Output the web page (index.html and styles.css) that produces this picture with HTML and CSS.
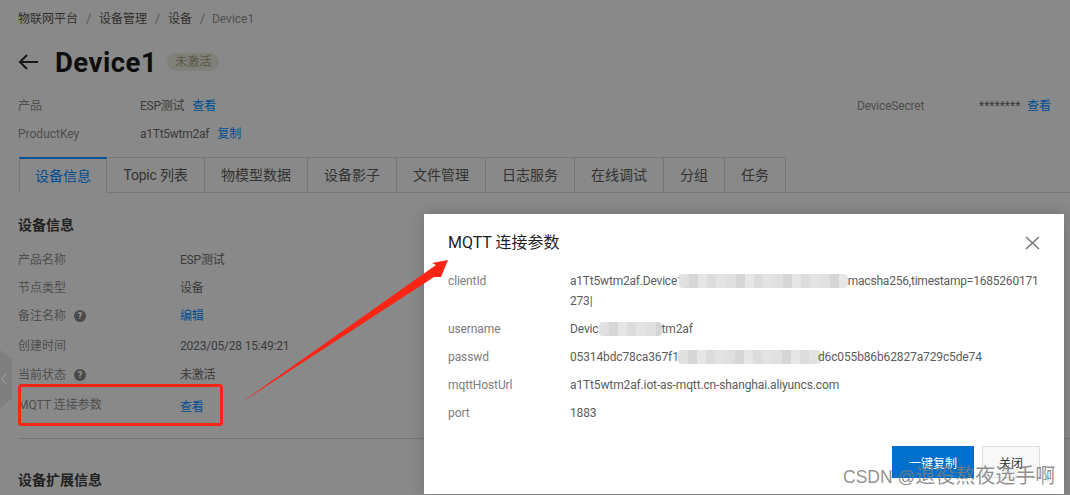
FILE: index.html
```html
<!DOCTYPE html>
<html lang="zh-CN">
<head>
<meta charset="utf-8">
<title>Device1</title>
<link rel="stylesheet" href="styles.css">
</head>
<body>
<main class="page">
  <nav class="crumbs"><span>物联网平台</span><i>/</i><span>设备管理</span><i>/</i><span>设备</span><i>/</i><span class="cur">Device1</span></nav>
  <header class="head">
    <svg class="back" width="20" height="16" viewBox="0 0 20 16"><path d="M20 8H2M9 1 2 8l7 7" fill="none" stroke="#16181a" stroke-width="2"/></svg>
    <h1>Device1</h1>
    <span class="badge">未激活</span>
  </header>
  <section class="meta">
    <div class="meta-l">
      <div class="mrow"><span class="k">产品</span><span class="v">ESP测试</span><a>查看</a></div>
      <div class="mrow"><span class="k">ProductKey</span><span class="v">a1Tt5wtm2af</span><a>复制</a></div>
    </div>
    <div class="meta-r"><span class="k2">DeviceSecret</span><span class="v2">********</span><a>查看</a></div>
  </section>
  <div class="tabs">
    <span class="tab on">设备信息</span><span class="tab t2">Topic 列表</span><span class="tab t3">物模型数据</span><span class="tab">设备影子</span><span class="tab">文件管理</span><span class="tab">日志服务</span><span class="tab">在线调试</span><span class="tab t4">分组</span><span class="tab t4">任务</span>
  </div>
  <h2 class="sec">设备信息</h2>
  <dl class="info">
    <div class="row"><dt>产品名称</dt><dd>ESP测试</dd></div>
    <div class="row"><dt>节点类型</dt><dd>设备</dd></div>
    <div class="row r-note"><dt>备注名称<b class="q">?</b></dt><dd><a>编辑</a></dd></div>
    <div class="row r-time"><dt>创建时间</dt><dd>2023/05/28 15:49:21</dd></div>
    <div class="row r-note"><dt>当前状态<b class="q">?</b></dt><dd>未激活</dd></div>
    <div class="row mq"><dt>MQTT 连接参数</dt><dd><a>查看</a></dd></div>
  </dl>
  <hr class="rule">
  <h2 class="sec ext">设备扩展信息</h2>
</main>

<div class="handle"><svg width="6" height="12" viewBox="0 0 6 12"><path d="M5 1 1 6l4 5" fill="none" stroke="#a2a2a2" stroke-width="1"/></svg></div>

<aside class="modal">
  <div class="m-head"><h3>MQTT 连接参数</h3>
    <svg class="close" width="15" height="14" viewBox="0 0 15 14"><path d="M1 1l13 12M14 1 1 13" fill="none" stroke="#777" stroke-width="1.6"/></svg></div>
  <div class="m-row two"><span class="mk">clientId</span><span class="mv id">a1Tt5wtm2af.Device1<span class="blur b1"></span>macsha256,timestamp=1685260171<br>273|</span></div>
  <div class="m-row"><span class="mk">username</span><span class="mv">Devic<span class="blur b2"></span>tm2af</span></div>
  <div class="m-row"><span class="mk">passwd</span><span class="mv">05314bdc78ca367f1c<span class="blur b3"></span>d6c055b86b62827a729c5de74</span></div>
  <div class="m-row"><span class="mk">mqttHostUrl</span><span class="mv">a1Tt5wtm2af.iot-as-mqtt.cn-shanghai.aliyuncs.com</span></div>
  <div class="m-row"><span class="mk">port</span><span class="mv">1883</span></div>
  <div class="m-foot"><button class="btn pri">一键复制</button><button class="btn">关闭</button></div>
</aside>

<svg class="mark" width="1070" height="495" viewBox="0 0 1070 495">
  <rect x="19.5" y="385.5" width="202" height="39" rx="2" fill="none" stroke="#fb2516" stroke-width="3"/>
  <path d="M242 402 436 265 432 263 448 260 441 277 434 277Z" fill="#fb2516"/>
</svg>
<div class="wm">CSDN @<span class="wm-cjk">退役熬夜选手啊</span></div>
</body>
</html>
```
FILE: styles.css
```css
* { box-sizing: border-box; }
html, body { margin: 0; height: 495px; overflow: hidden; }
body { background: #898989; font: 12px/18px Roboto, "Noto Sans CJK SC", sans-serif; color: #3b3b3b; }
a { color: #004f92; }
.page { padding: 10px 0 0 18px; height: 495px; overflow: hidden; }
.crumbs { display: flex; height: 18px; align-items: center; gap: 8px; color: #2f2f2f; }
.crumbs i { font-style: normal; color: #555; }
.crumbs .cur { color: #505050; margin-left: -1px; }
.head { display: flex; align-items: center; height: 40px; margin-top: 14px; }
.back { margin-right: 17px; }
h1 { margin: 2px 10px 0 0; font-size: 27.5px; line-height: 40px; font-weight: 700; color: #0d0d0d; letter-spacing: .5px; }
.badge { height: 18px; padding: 0 8px; line-height: 18px; border-radius: 9px; background: #80807a; color: #5a5745; }
.meta { display: flex; justify-content: space-between; margin-top: 15px; padding-right: 19px; height: 47px; }
.meta-l { display: flex; flex-direction: column; gap: 10px; }
.mrow { display: flex; height: 18px; }
.k { width: 122px; color: #4e4e4e; }
.v { margin-right: 8px; letter-spacing: -.25px; }
.meta-r { display: flex; height: 18px; }
.k2 { width: 122px; color: #4e4e4e; letter-spacing: -.2px; }
.v2 { width: 48px; }
.tabs { display: flex; margin: 13px 0 0 1px; height: 36px; border-bottom: 1px solid #777; }
.tab { display: flex; align-items: center; justify-content: center; width: 89px; height: 36px; font-size: 14px; border: 1px solid #777; border-left: 0; color: #333; }
.tab.on { width: 88px; border-top: 2px solid #004f92; border-bottom: 0; border-left: 1px solid #777; color: #004f92; background: #898989; }
.tab.t2 { width: 98px; letter-spacing: -.2px; }
.tab.t3 { width: 103px; }
.tab.t4 { width: 61px; }
.sec { margin: 22px 0 0; font-size: 14px; line-height: 20px; font-weight: 700; color: #222; }
.info { margin: 16px 0 0; }
.row { display: flex; height: 18px; margin-bottom: 10px; }
.row dt { display: flex; align-items: center; width: 162px; color: #4e4e4e; }
.row dd { margin: 0; letter-spacing: -.2px; }
.r-note { margin-bottom: 12px; }
.r-time { margin-bottom: 11px; }
.mq dd { padding-top: 2px; }
.q { display: block; width: 12px; height: 12px; margin-left: 8px; border-radius: 50%; background: #4a4a4a; color: #999; font: 700 9px/12px Roboto, sans-serif; text-align: center; }
.rule { margin: 24px 0 0; border: 0; border-top: 1px solid #777; }
.ext { margin-top: 31px; }
.handle { position: absolute; left: 0; top: 350px; width: 12px; height: 58px; background: #7f7f7f; clip-path: polygon(0 0, 100% 16%, 100% 84%, 0 100%); display: flex; align-items: center; padding-left: 1px; }
.modal { position: absolute; left: 424px; top: 214px; width: 640px; height: 280px; background: #fff; padding: 20px 24px; color: #5c5c5c; box-shadow: 0 0 14px rgba(0,0,0,.18); }
.m-head { display: flex; justify-content: space-between; align-items: center; height: 18px; margin-bottom: 19px; }
h3 { margin: 0; font-size: 16px; line-height: 18px; font-weight: 400; color: #1f1f1f; }
.m-row { display: flex; min-height: 18px; margin-bottom: 10px; }
.two { margin-bottom: 9px; line-height: 20px; }
.mk { flex: none; width: 122px; color: #7d7d7d; letter-spacing: -.1px; }
.mv { flex: 1; letter-spacing: -.13px; white-space: nowrap; }
.mv.id { letter-spacing: -.2px; }
.blur { display: inline-block; height: 14px; vertical-align: -3px; background: repeating-linear-gradient(90deg, #e0e0e0 0 10px, #d6d6d6 10px 19px, #e6e6e6 19px 28px, #dcdcdc 28px 37px, #e3e3e3 37px 47px); border-radius: 4px; }
.b1 { width: 169px; margin-left: -5px; }
.b2 { width: 63px; }
.b3 { width: 143px; margin: 0 -3px 0 -7px; }
.m-foot { position: absolute; right: 24px; bottom: 16px; display: flex; gap: 8px; }
.btn { width: 58px; height: 32px; padding: 0; font: 12px Roboto, "Noto Sans CJK SC", sans-serif; background: #f8f8f8; border: 1px solid #ddd; color: #333; }
.btn.pri { width: 82px; background: #0070cc; border-color: #0070cc; color: #fff; }
.mark { position: absolute; left: 0; top: 0; pointer-events: none; }
.wm { position: absolute; left: 843px; top: 464px; font: 17.5px/24px "Liberation Sans", "Noto Sans CJK SC", sans-serif; color: rgba(125,125,125,.85); white-space: nowrap; }
.wm-cjk { font-size: 20px; }
```
